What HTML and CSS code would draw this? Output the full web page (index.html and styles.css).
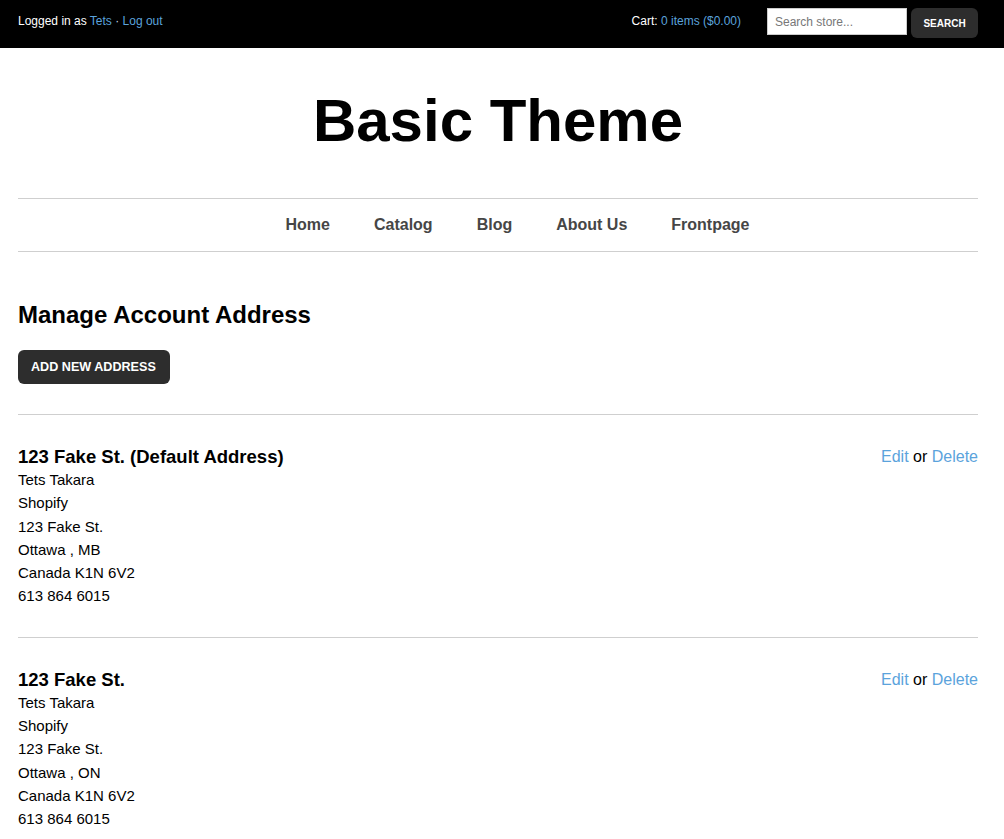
FILE: index.html
```html
<!DOCTYPE html>
<html lang="en">
<head>
<meta charset="utf-8">
<title>Basic Theme - Manage Account Address</title>
<link rel="stylesheet" href="styles.css">
</head>
<body>
<div class="topbar">
  <div class="wrap topbar-inner">
    <div class="login">Logged in as <a href="#">Tets</a> <span class="dot">·</span> <a href="#">Log out</a></div>
    <div class="topbar-right">
      <div class="cart">Cart: <a href="#">0 items ($0.00)</a></div>
      <form class="search">
        <input class="search-input" type="text" placeholder="Search store...">
        <button class="search-btn" type="button">SEARCH</button>
      </form>
    </div>
  </div>
</div>

<div class="wrap">
  <header class="header">
    <h1 class="site-title">Basic Theme</h1>
  </header>
  <nav class="nav">
    <a href="#">Home</a>
    <a href="#">Catalog</a>
    <a href="#">Blog</a>
    <a href="#">About Us</a>
    <a href="#">Frontpage</a>
  </nav>

  <main class="main">
    <h2 class="page-title">Manage Account Address</h2>
    <button class="btn" type="button">ADD NEW ADDRESS</button>

    <div class="address">
      <div class="address-body">
        <h3 class="address-title">123 Fake St. (Default Address)</h3>
        <p class="address-line">Tets Takara</p>
        <p class="address-line">Shopify</p>
        <p class="address-line">123 Fake St.</p>
        <p class="address-line">Ottawa , MB</p>
        <p class="address-line">Canada K1N 6V2</p>
        <p class="address-line">613 864 6015</p>
      </div>
      <div class="actions"><a href="#">Edit</a> or <a href="#">Delete</a></div>
    </div>

    <div class="address">
      <div class="address-body">
        <h3 class="address-title">123 Fake St.</h3>
        <p class="address-line">Tets Takara</p>
        <p class="address-line">Shopify</p>
        <p class="address-line">123 Fake St.</p>
        <p class="address-line">Ottawa , ON</p>
        <p class="address-line">Canada K1N 6V2</p>
        <p class="address-line">613 864 6015</p>
      </div>
      <div class="actions"><a href="#">Edit</a> or <a href="#">Delete</a></div>
    </div>
  </main>
</div>
</body>
</html>
```

FILE: styles.css
```css
* { box-sizing: border-box; }

html, body {
  margin: 0;
  padding: 0;
  background: #fff;
  color: #000;
  font-family: "Liberation Sans", Arial, Helvetica, sans-serif;
}

a {
  color: #5ba3dc;
  text-decoration: none;
}

.wrap {
  width: 960px;
  margin-left: 18px;
}

/* Top bar */
.topbar {
  background: #000;
  height: 48px;
  color: #fff;
  font-size: 12px;
}

.topbar-inner {
  display: flex;
  justify-content: space-between;
  align-items: flex-start;
  padding-top: 8px;
}

.login,
.cart {
  line-height: 27px;
}

.dot {
  color: #c8d6e2;
}

.topbar-right {
  display: flex;
  align-items: flex-start;
}

.cart {
  margin-right: 26px;
}

.search {
  display: flex;
  align-items: flex-start;
  margin: 0;
}

.search-input {
  width: 140px;
  height: 27px;
  margin: 0 4px 0 0;
  padding: 0 7px;
  border: 1px solid #ccc;
  background: #fff;
  font-family: "Liberation Sans", Arial, sans-serif;
  font-size: 12px;
  color: #333;
  outline: none;
}

.search-input::placeholder {
  color: #777;
}

.search-btn {
  height: 30px;
  width: 67px;
  padding: 0;
  border: 0;
  border-radius: 6px;
  background: #2d2d2d;
  color: #fff;
  font-family: "Liberation Sans", Arial, sans-serif;
  font-weight: bold;
  font-size: 10px;
}

/* Header */
.header {
  padding: 38px 0 43px;
  border-bottom: 1px solid #cfcfcf;
}

.site-title {
  margin: 0;
  text-align: center;
  font-size: 60px;
  line-height: 69px;
  font-weight: bold;
  color: #000;
}

/* Nav */
.nav {
  display: flex;
  justify-content: center;
  gap: 44px;
  padding: 17px 0 17px 39px;
  border-bottom: 1px solid #cfcfcf;
  font-size: 16px;
  line-height: 18px;
  font-weight: bold;
}

.nav a {
  color: #464646;
}

/* Main */
.main {
  padding-top: 49px;
}

.page-title {
  margin: 0 0 21px;
  font-size: 24px;
  line-height: 28px;
  font-weight: bold;
}

.btn {
  display: block;
  height: 34px;
  padding: 0 14px 0 13px;
  border: 0;
  border-radius: 6px;
  background: #2d2d2d;
  color: #fff;
  font-family: "Liberation Sans", Arial, sans-serif;
  font-weight: bold;
  font-size: 12.6px;
  margin-bottom: 30px;
}

.address {
  display: flex;
  justify-content: space-between;
  align-items: flex-start;
  border-top: 1px solid #cfcfcf;
  padding: 30px 0 29px;
}

.address-title {
  margin: 0;
  font-size: 18.5px;
  line-height: 23px;
  font-weight: bold;
}

.address-line {
  margin: 0;
  font-size: 15px;
  line-height: 23.3px;
  color: #000;
}

.actions {
  font-size: 16px;
  line-height: 23px;
}
```
